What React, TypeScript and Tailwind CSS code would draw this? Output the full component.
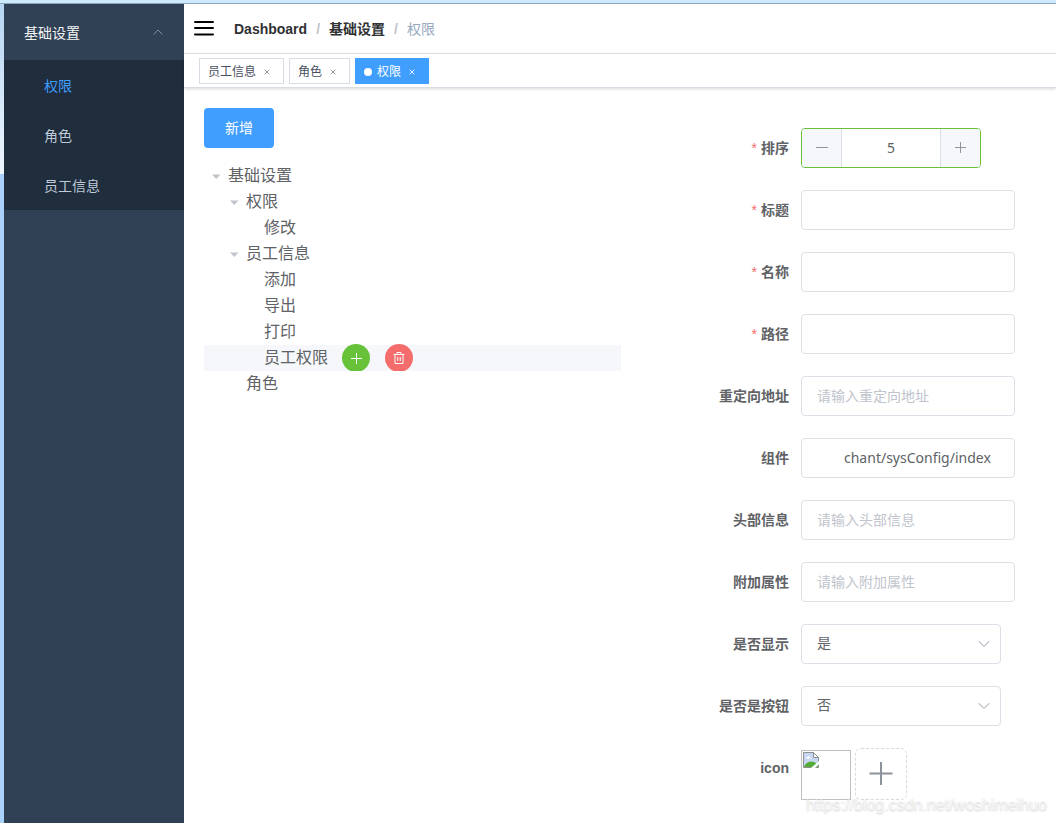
import { useState } from 'react';
import type { ReactNode } from 'react';

type TreeNode = {
  label: string;
  level: number;
  expanded?: boolean;
  selected?: boolean;
};

const menuItems = ['权限', '角色', '员工信息'];

const tags = [
  { label: '员工信息', active: false },
  { label: '角色', active: false },
  { label: '权限', active: true },
];

const nodes: TreeNode[] = [
  { label: '基础设置', level: 1, expanded: true },
  { label: '权限', level: 2, expanded: true },
  { label: '修改', level: 3 },
  { label: '员工信息', level: 2, expanded: true },
  { label: '添加', level: 3 },
  { label: '导出', level: 3 },
  { label: '打印', level: 3 },
  { label: '员工权限', level: 3, selected: true },
  { label: '角色', level: 2 },
];

const indents = ['', 'pl-0', 'pl-[18px]', 'pl-9'];

const inputClass =
  'h-10 w-full rounded border border-[#dcdfe6] bg-white px-[15px] pb-0.5 text-sm text-[#606266] placeholder-[#c0c4cc] outline-none';

function Sidebar() {
  return (
    <aside className="w-[180px] shrink-0 bg-[#304156] text-sm">
      <button
        type="button"
        aria-expanded="true"
        className="flex h-14 w-full items-center justify-between px-5 pt-0.5 text-[#f4f4f5]"
      >
        基础设置
        <svg className="h-3 w-3 text-[#909399]" viewBox="0 0 12 12" fill="none" stroke="currentColor" strokeWidth="0.9" aria-hidden="true">
          <path d="M1.500 7.500 6 3 10.500 7.500" />
        </svg>
      </button>
      <nav className="flex flex-col bg-[#1f2d3d]">
        {menuItems.map((item, i) => (
          <a
            key={item}
            href="#"
            className={`flex h-[50px] items-center pt-0.5 pl-10 ${i === 0 ? 'text-[#409eff]' : 'text-[#bfcbd9]'}`}
          >
            {item}
          </a>
        ))}
      </nav>
    </aside>
  );
}

function Header() {
  return (
    <header className="flex h-[50px] items-center border-b border-[#e2e4e8] px-2.5">
      <button type="button" aria-label="切换菜单" className="mr-5">
        <svg className="h-5 w-5" viewBox="0 0 20 20" stroke="#000" strokeWidth="2" strokeLinecap="round" aria-hidden="true">
          <path d="M1 3h18M1 9h18M1 15.500h18" />
        </svg>
      </button>
      <nav aria-label="面包屑" className="flex items-center text-sm">
        <a href="#" className="font-bold text-[#303133]">Dashboard</a>
        <span className="mx-[9px] font-bold text-[#c0c4cc]">/</span>
        <a href="#" className="font-bold text-[#303133]">基础设置</a>
        <span className="mx-[9px] font-bold text-[#c0c4cc]">/</span>
        <span className="text-[#97a8be]">权限</span>
      </nav>
    </header>
  );
}

function Tags() {
  return (
    <div className="flex h-[34px] items-center gap-[5px] border-b border-[#d8dce5] px-[15px] shadow-[0_1px_3px_rgba(0,0,0,0.16)]">
      {tags.map((tag) => (
        <div
          key={tag.label}
          className={`flex h-[26px] items-center border px-2 pt-0.5 text-xs ${
            tag.active ? 'border-[#409eff] bg-[#409eff] text-white' : 'border-[#d8dce5] bg-white text-[#495060]'
          }`}
        >
          {tag.active && <span className="mr-[5px] h-2 w-2 rounded-full bg-white" />}
          <a href="#">{tag.label}</a>
          <button type="button" aria-label={`关闭${tag.label}`} className="ml-[3px] flex h-4 w-4 items-center justify-center">
            <svg
              className={`h-1.5 w-1.5 ${tag.active ? 'text-white' : 'text-[#909399]'}`}
              viewBox="0 0 6 6"
              stroke="currentColor"
              strokeWidth="0.9"
              aria-hidden="true"
            >
              <path d="M.7.7l4.600 4.600M5.300.7.7 5.300" />
            </svg>
          </button>
        </div>
      ))}
    </div>
  );
}

function PermissionTree() {
  return (
    <div role="tree" aria-label="权限" className="mt-[15px] flex flex-col text-base text-[#606266]">
      {nodes.map((node, i) => (
        <div
          key={i}
          role="treeitem"
          aria-level={node.level}
          aria-expanded={node.expanded}
          aria-selected={!!node.selected}
          className={`flex h-[26px] items-center ${indents[node.level]} ${node.selected ? 'bg-[#f5f7fa]' : 'bg-white'}`}
        >
          <span className="flex w-6 shrink-0 justify-center">
            {node.expanded && (
              <svg className="h-3 w-3" viewBox="0 0 12 12" fill="#c0c4cc" aria-hidden="true">
                <path d="M2 4.500h8.500L6.250 9z" />
              </svg>
            )}
          </span>
          <span>{node.label}</span>
          {node.selected && (
            <span className="ml-3.5 flex gap-[15px]">
              <button
                type="button"
                aria-label="添加"
                className="flex h-7 w-7 items-center justify-center rounded-full bg-[#67c23a] text-white"
              >
                <svg className="h-3 w-3" viewBox="0 0 12 12" fill="none" stroke="currentColor" aria-hidden="true">
                  <path d="M6.500 1v11M1 6.500h11" />
                </svg>
              </button>
              <button
                type="button"
                aria-label="删除"
                className="flex h-7 w-7 items-center justify-center rounded-full bg-[#f56c6c] text-white"
              >
                <svg className="h-3 w-3" viewBox="0 0 12 12" fill="none" stroke="currentColor" aria-hidden="true">
                  <path d="M.5 2.500h11M4 2.500v-2h4v2M2 2.500v9h8v-9M4.750 5v4M7.250 5v4" />
                </svg>
              </button>
            </span>
          )}
        </div>
      ))}
    </div>
  );
}

function FormRow({ label, id, required, children }: { label: string; id: string; required?: boolean; children: ReactNode }) {
  return (
    <div className="flex items-start">
      <label
        htmlFor={id}
        className="w-40 shrink-0 pr-3 text-right font-['Liberation_Sans','Noto_Sans_CJK_SC',sans-serif] text-sm leading-10 font-bold text-[#606266]"
      >
        {required && <span className="mr-1 font-normal text-[#f56c6c]">*</span>}
        {label}
      </label>
      <div className="min-w-0 flex-1">{children}</div>
    </div>
  );
}

function SelectBox({ id, initial }: { id: string; initial: string }) {
  return (
    <div className="relative w-[200px]">
      <select id={id} defaultValue={initial} className={`${inputClass} appearance-none`}>
        <option>是</option>
        <option>否</option>
      </select>
      <svg
        className="pointer-events-none absolute top-3.5 right-[11px] h-3 w-3 text-[#c0c4cc]"
        viewBox="0 0 12 12"
        fill="none"
        stroke="currentColor"
        strokeWidth="1.2"
        aria-hidden="true"
      >
        <path d="M.75 3.250 6 8.500 11.250 3.250" />
      </svg>
    </div>
  );
}

function PermissionForm() {
  const [order, setOrder] = useState(5);
  return (
    <form className="flex w-1/2 flex-col gap-[22px] pt-5 pr-[23px] pl-5 font-['Noto_Sans','Noto_Sans_CJK_SC',sans-serif]">
      <FormRow label="排序" id="order" required>
        <div className="flex h-10 w-[180px] overflow-hidden rounded border border-[#67c23a]">
          <button
            type="button"
            aria-label="减少"
            onClick={() => setOrder(order - 1)}
            className="flex w-10 shrink-0 items-center justify-center border-r border-[#dcdfe6] bg-[#f5f7fa] text-[#909399]"
          >
            <svg className="h-3 w-3" viewBox="0 0 12 12" stroke="currentColor" aria-hidden="true">
              <path d="M0 5.500h12" />
            </svg>
          </button>
          <input
            id="order"
            inputMode="numeric"
            value={order}
            onChange={(e) => setOrder(Number(e.target.value) || 0)}
            className="w-0 flex-1 bg-white text-center text-sm text-[#606266] outline-none"
          />
          <button
            type="button"
            aria-label="增加"
            onClick={() => setOrder(order + 1)}
            className="flex w-10 shrink-0 items-center justify-center border-l border-[#dcdfe6] bg-[#f5f7fa] text-[#909399]"
          >
            <svg className="h-3 w-3" viewBox="0 0 12 12" stroke="currentColor" aria-hidden="true">
              <path d="M0 5.500h11M5.500 0v11" />
            </svg>
          </button>
        </div>
      </FormRow>
      <FormRow label="标题" id="title" required>
        <input id="title" className={inputClass} />
      </FormRow>
      <FormRow label="名称" id="name" required>
        <input id="name" className={inputClass} />
      </FormRow>
      <FormRow label="路径" id="path" required>
        <input id="path" className={inputClass} />
      </FormRow>
      <FormRow label="重定向地址" id="redirect">
        <input id="redirect" placeholder="请输入重定向地址" className={inputClass} />
      </FormRow>
      <FormRow label="组件" id="component">
        <input id="component" defaultValue="chant/sysConfig/index" className={`${inputClass} pl-[42px]`} />
      </FormRow>
      <FormRow label="头部信息" id="meta">
        <input id="meta" placeholder="请输入头部信息" className={inputClass} />
      </FormRow>
      <FormRow label="附加属性" id="extra">
        <input id="extra" placeholder="请输入附加属性" className={inputClass} />
      </FormRow>
      <FormRow label="是否显示" id="visible">
        <SelectBox id="visible" initial="是" />
      </FormRow>
      <FormRow label="是否是按钮" id="isButton">
        <SelectBox id="isButton" initial="否" />
      </FormRow>
      <FormRow label="icon" id="icon">
        <div className="flex items-end gap-1">
          <div className="h-[50px] w-[50px] border border-[#c0c0c0] p-px">
            <svg className="h-4 w-4" viewBox="0 0 16 16" aria-hidden="true">
              <path d="M.5.5h10l5 5v10H.5z" fill="#c6d6f5" stroke="#8f8f8f" />
              <path d="M10.500.5v5h5z" fill="#fff" stroke="#8f8f8f" />
              <path d="M2.500 6.500c0-1.500 1.500-1.500 1.800-1.200C4.700 3.800 7 4 7 5.300c1 0 1.300 1.200.5 1.200z" fill="#fff" />
              <path d="M1 15c1.500-3.500 4-5.500 7-5.500 2.500 0 4.500 1 7 3V15z" fill="#54ac36" />
              <path d="M8 16 16 9v3.200L12 16z" fill="#fff" />
            </svg>
          </div>
          <button
            id="icon"
            type="button"
            aria-label="上传图标"
            className="flex h-[52px] w-[52px] items-center justify-center rounded-md border border-dashed border-[#d9d9d9] text-[#8c939d]"
          >
            <svg className="h-6 w-6" viewBox="0 0 24 24" stroke="currentColor" strokeWidth="2" aria-hidden="true">
              <path d="M.5 11.500h23M12 0v23" />
            </svg>
          </button>
        </div>
      </FormRow>
    </form>
  );
}

export default function App() {
  return (
    <div className="relative flex min-h-screen flex-col bg-[#cdeafd] font-['Liberation_Sans','Noto_Sans_CJK_SC',sans-serif]">
      <div className="h-1 border-b border-[#8fa3b8]" />
      <div className="flex flex-1">
        <div className="flex w-1 shrink-0 flex-col bg-[#a9d1fb]">
          <div className="h-[170px] bg-linear-to-b from-[#b5d5f3] to-[#eff6fe]" />
        </div>
        <Sidebar />
        <div className="flex min-w-0 flex-1 flex-col bg-white">
          <Header />
          <Tags />
          <main className="flex pt-5 pr-[18px] pl-5">
            <section className="w-1/2">
              <button type="button" className="h-10 rounded bg-[#409eff] px-[21px] text-sm text-white">
                新增
              </button>
              <PermissionTree />
            </section>
            <PermissionForm />
          </main>
        </div>
      </div>
      <div className="pointer-events-none absolute right-[9px] bottom-1.5 text-base text-white/70 [text-shadow:0_1px_2px_rgba(0,0,0,0.22)]">
        https://blog.csdn.net/woshimeihuo
      </div>
    </div>
  );
}
